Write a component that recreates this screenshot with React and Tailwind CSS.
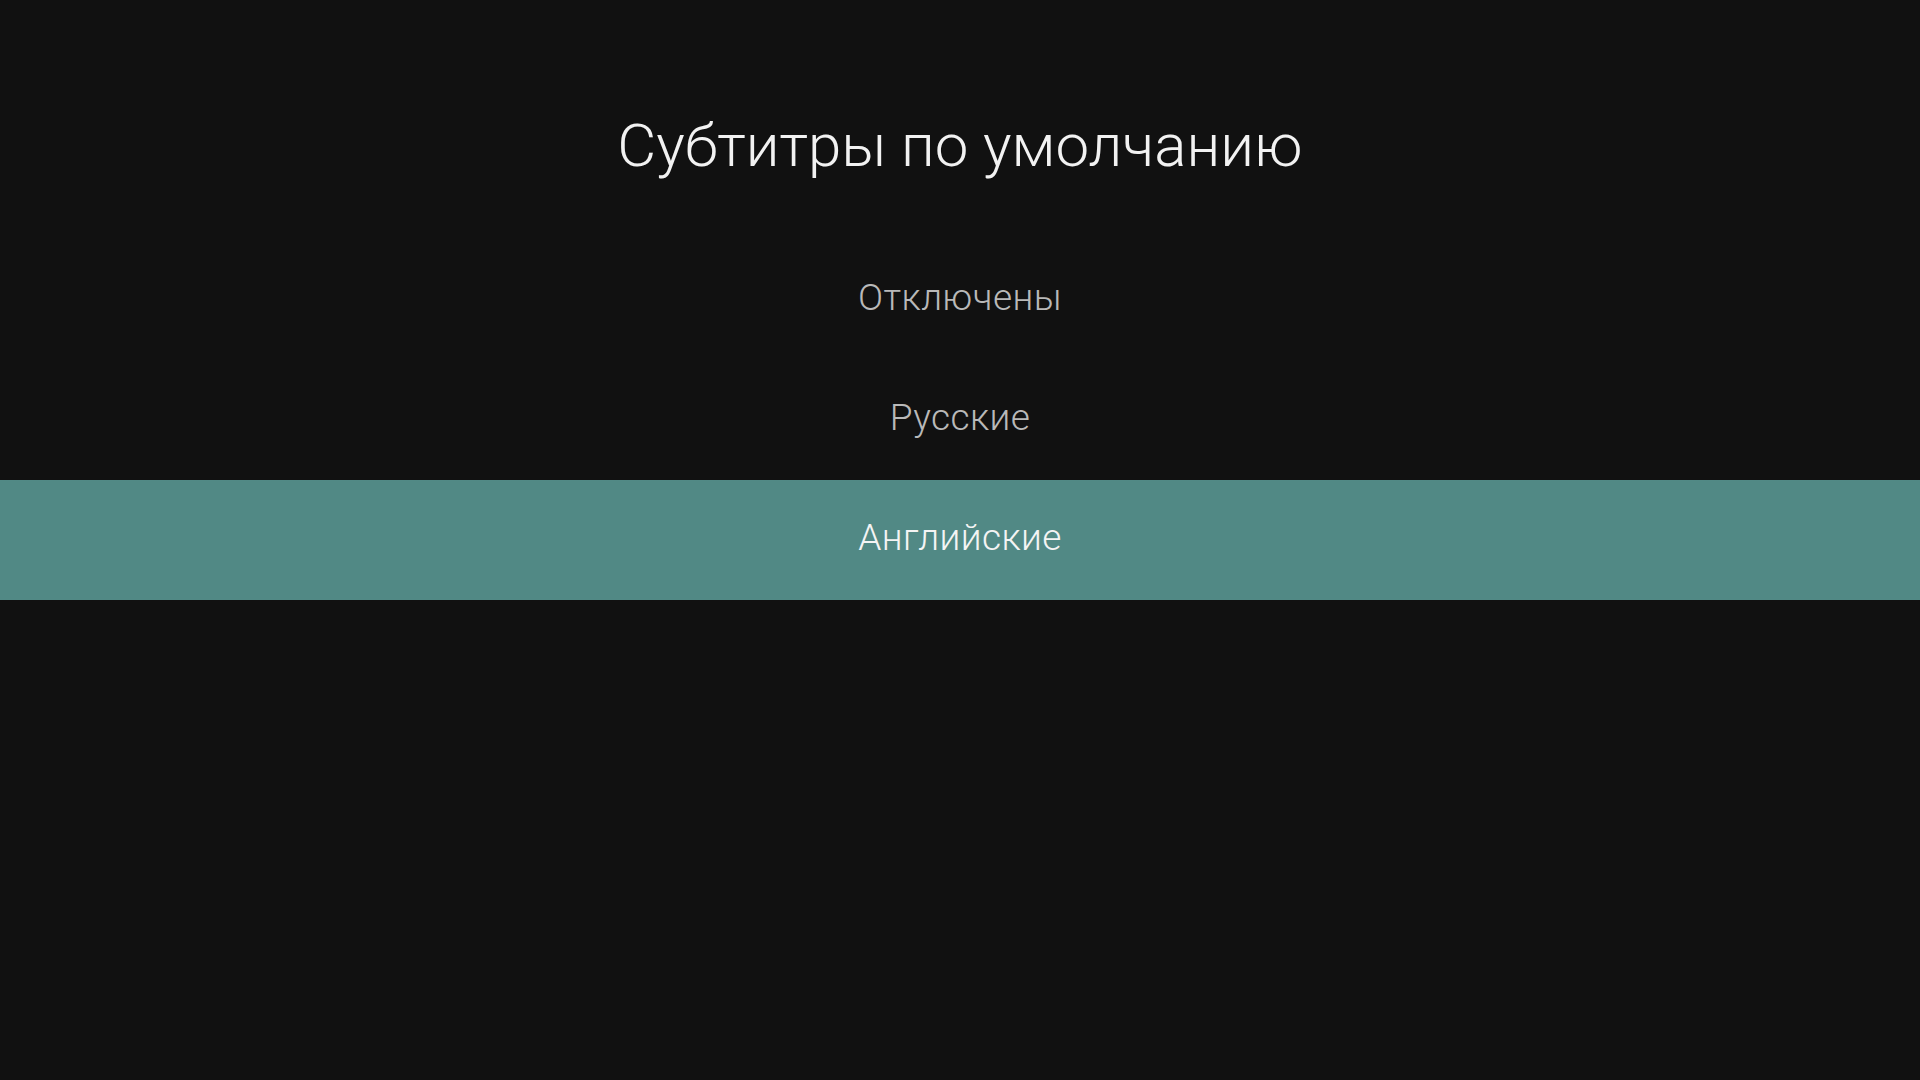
import React from 'react';

const options = ['Отключены', 'Русские', 'Английские'];

export default function App() {
  const selected = 2;

  return (
    <div
      className="min-h-screen w-full bg-[#111111] flex flex-col"
      style={{ fontFamily: 'Roboto, "Noto Sans", sans-serif' }}
    >
      <div className="h-[240px] flex items-start justify-center pt-[107px]">
        <h1 className="text-[60px] leading-[78px] font-light text-[#f2f2f2]">
          Субтитры по умолчанию
        </h1>
      </div>

      <div className="flex flex-col">
        {options.map((label, i) => (
          <div
            key={label}
            className={
              i === selected
                ? 'h-[120px] flex items-center justify-center pb-[5px] bg-[#518985] text-[#f4f4f4]'
                : 'h-[120px] flex items-center justify-center pb-[5px] text-[#b9b9b9]'
            }
          >
            <span className="text-[37px] font-light tracking-[0.4px]">{label}</span>
          </div>
        ))}
      </div>
    </div>
  );
}
